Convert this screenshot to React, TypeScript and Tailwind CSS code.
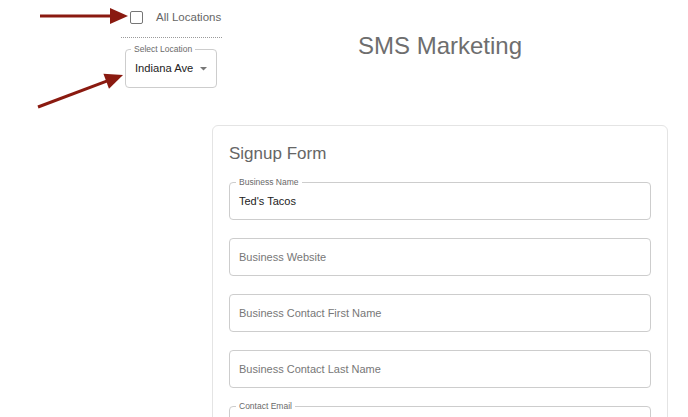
import React from "react";

function Field({ label, value, placeholder }: { label?: string; value?: string; placeholder?: string }) {
  return (
    <div className="relative h-[38px] border border-[#cdcdcd] rounded-[4px] flex items-center pl-[9px]">
      {label && (
        <span className="absolute top-[-6px] left-[6px] px-[3px] bg-white text-[8.5px] leading-[10px] text-[#6a6a6a]">
          {label}
        </span>
      )}
      {value ? (
        <span className="text-[11px] text-[#222]">{value}</span>
      ) : (
        <span className="text-[11px] text-[#777]">{placeholder}</span>
      )}
    </div>
  );
}

export default function App() {
  return (
    <div className="relative w-[688px] h-[417px] overflow-hidden bg-white font-['Liberation_Sans',Arial,sans-serif]">
      <div className="flex">
        <div className="ml-[121px] w-[101px] flex flex-col">
          <div className="h-[37px] pt-[11px] pl-[9px]">
            <div className="flex items-center h-[13px] gap-[13px]">
              <div className="w-[13px] h-[13px] border-[1.5px] border-[#767676] rounded-[2px]" />
              <span className="text-[11.5px] text-[#666] whitespace-nowrap">All Locations</span>
            </div>
          </div>
          <div className="border-t border-dotted border-[#9a9a9a]" />
          <div className="relative mt-[11px] ml-[4px] w-[92px] h-[39px] border border-[#cdcdcd] rounded-[4px] flex items-center pl-[9px] pr-[9px]">
            <span className="absolute top-[-6px] left-[5px] px-[3px] bg-white text-[8.5px] leading-[10px] text-[#6a6a6a] whitespace-nowrap">
              Select Location
            </span>
            <span className="text-[11.2px] text-[#222] whitespace-nowrap">Indiana Ave</span>
            <svg className="ml-auto" width="7" height="4" viewBox="0 0 7 4">
              <polygon points="0,0 7,0 3.5,3.5" fill="#777" />
            </svg>
          </div>
        </div>
        <div className="w-[436px] pt-[32px] text-center">
          <h1 className="text-[24px] leading-[28px] text-[#6e6e6e]">SMS Marketing</h1>
        </div>
      </div>

      <div className="ml-[212px] mt-[37px] w-[456px] border border-[#e4e4e4] rounded-[6px] px-[16px] pt-[16px] pb-[20px]">
        <h2 className="text-[17px] leading-[24px] text-[#666] mb-[16px]">Signup Form</h2>
        <div className="flex flex-col gap-[18px]">
          <Field label="Business Name" value="Ted's Tacos" />
          <Field placeholder="Business Website" />
          <Field placeholder="Business Contact First Name" />
          <Field placeholder="Business Contact Last Name" />
          <Field label="Contact Email" placeholder="" />
        </div>
      </div>

      <svg className="absolute inset-0 pointer-events-none" width="688" height="417" viewBox="0 0 688 417">
        <g fill="#8a1a10" stroke="#8a1a10">
          <line x1="40" y1="16" x2="111" y2="16" strokeWidth="3" />
          <polygon points="110,8 128,16 110,24" stroke="none" />
          <line x1="38" y1="107" x2="108" y2="80.6" strokeWidth="3" />
          <polygon points="123,75 109,88.8 103.4,73.8" stroke="none" />
        </g>
      </svg>
    </div>
  );
}
